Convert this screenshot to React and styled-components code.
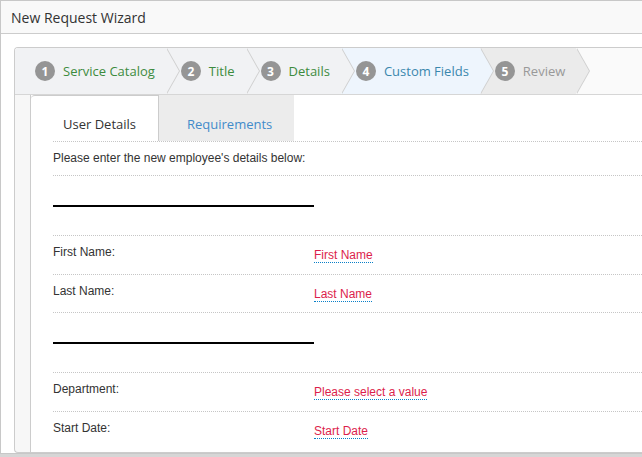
import React from 'react';
import styled, { createGlobalStyle } from 'styled-components';

const GlobalStyle = createGlobalStyle`
  html, body {
    margin: 0;
    padding: 0;
    background: #d6d6d6;
    overflow: hidden;
  }
  body {
    width: 642px;
    height: 457px;
  }
`;

const stepTheme = {
  done: { bg: '#f1f2f4', color: '#3d8b3d' },
  active: { bg: '#eef5fd', color: '#3a87ad' },
  todo: { bg: '#ebebeb', color: '#999999' },
};

// widget runs on past the right edge of the window, so no right border
const Widget = styled.div`
  width: 641px;
  background: #fff;
  border: 1px solid #c8c8c8;
  border-right: none;
`;

const Header = styled.div`
  height: 32px;
  display: flex;
  align-items: center;
  padding-left: 10px;
  background: #f9f9f9;
  border-bottom: 1px solid #cccccc;
  font-family: 'Open Sans', sans-serif;
  font-size: 14px;
  color: #333;
`;

const Body = styled.div`
  padding: 13px 0 0 13px;
`;

const Panel = styled.div`
  border: 1px solid #cccccc;
  border-right: none;
  border-radius: 4px 0 0 4px;
  background: #f7f7f7;
  overflow: hidden;
`;

const StepsBar = styled.div`
  display: flex;
  height: 46px;
  background: #fafafa;
  border-bottom: 1px solid #d6d6d6;
`;

const Step = styled.div`
  position: relative;
  z-index: ${(p) => p.$z};
  flex: none;
  display: flex;
  align-items: center;
  gap: 8px;
  height: 46px;
  padding: 0 11px 0 ${(p) => (p.$first ? 20 : 15)}px;
  box-sizing: border-box;
  background: ${(p) => stepTheme[p.$state].bg};
  color: ${(p) => stepTheme[p.$state].color};
  font-family: 'Open Sans', sans-serif;
  font-size: 13px;

  /* chevron tip overlapping next step */
  &::before,
  &::after {
    content: '';
    position: absolute;
    top: 0;
    width: 0;
    height: 0;
    border-style: solid;
    border-width: 23px 0 23px 13px;
  }
  &::before {
    right: -14px;
    border-color: transparent transparent transparent #cfcfcf;
  }
  &::after {
    right: -13px;
    border-color: transparent transparent transparent ${(p) => stepTheme[p.$state].bg};
  }
`;

const StepNum = styled.span`
  width: 20px;
  height: 20px;
  border-radius: 50%;
  background: #959595;
  color: #fff;
  font-weight: 700;
  font-size: 12px;
  display: flex;
  align-items: center;
  justify-content: center;
`;

const Content = styled.div`
  margin-left: 15px;
  background: #fff;
  border-left: 1px solid #cccccc;
  padding-bottom: 3px;
`;

const TabRow = styled.div`
  display: flex;
  height: 46px;
`;

const Tab = styled.div`
  box-sizing: border-box;
  height: 46px;
  display: flex;
  align-items: flex-end;
  padding: 0 22px 8px ${(p) => p.$pl}px;
  font-family: 'Open Sans', sans-serif;
  font-size: 13px;
  line-height: 18px;
  background: ${(p) => (p.$active ? '#fff' : '#ececec')};
  color: ${(p) => (p.$active ? '#333' : '#428bca')};
  border-top: ${(p) => (p.$active ? '1px solid #cccccc' : 'none')};
  border-right: ${(p) => (p.$active ? '1px solid #cccccc' : 'none')};
  border-top-left-radius: ${(p) => (p.$active ? '4px' : '0')};
`;

const Rows = styled.div`
  margin-left: 22px;
  font-family: 'Liberation Sans', Arial, sans-serif;
  font-size: 12px;
  color: #333;
`;

const Row = styled.div`
  display: flex;
  align-items: flex-start;
  border-top: 1px dotted #c6c6c6;
  padding: 9px 0 ${(p) => (p.$intro ? '10px' : '10.5px')};
  line-height: 14px;
`;

const SepRow = styled.div`
  border-top: 1px dotted #c6c6c6;
  padding: 29px 0 28px;
`;

const Rule = styled.div`
  width: 261px;
  height: 2px;
  background: #000;
`;

const Label = styled.div`
  width: 261px;
  flex: none;
`;

const Value = styled.span`
  margin-top: 3px;
  color: #dc1e4c;
  border-bottom: 1px dotted #0a80c8;
`;

const steps = [
  { n: 1, label: 'Service Catalog', state: 'done' },
  { n: 2, label: 'Title', state: 'done' },
  { n: 3, label: 'Details', state: 'done' },
  { n: 4, label: 'Custom Fields', state: 'active' },
  { n: 5, label: 'Review', state: 'todo' },
];

const Field = ({ label, value }) => (
  <Row>
    <Label>{label}</Label>
    <Value>{value}</Value>
  </Row>
);

export default function App() {
  return (
    <>
      <GlobalStyle />
      <Widget>
        <Header>New Request Wizard</Header>
        <Body>
          <Panel>
            <StepsBar>
              {steps.map((s, i) => (
                <Step key={s.n} $state={s.state} $first={i === 0} $z={10 - i}>
                  <StepNum>{s.n}</StepNum>
                  {s.label}
                </Step>
              ))}
            </StepsBar>
            <Content>
              <TabRow>
                <Tab $active $pl={32}>User Details</Tab>
                <Tab $pl={28}>Requirements</Tab>
              </TabRow>
              <Rows>
                <Row $intro>Please enter the new employee's details below:</Row>
                <SepRow><Rule /></SepRow>
                <Field label="First Name:" value="First Name" />
                <Field label="Last Name:" value="Last Name" />
                <SepRow><Rule /></SepRow>
                <Field label="Department:" value="Please select a value" />
                <Field label="Start Date:" value="Start Date" />
              </Rows>
            </Content>
          </Panel>
        </Body>
      </Widget>
    </>
  );
}
